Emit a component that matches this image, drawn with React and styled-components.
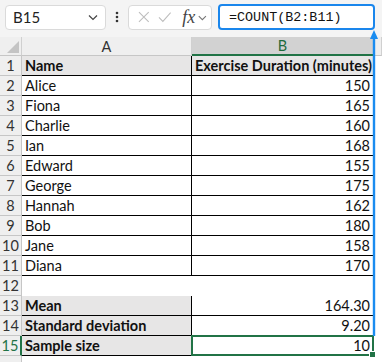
import React from 'react';
import styled, { createGlobalStyle } from 'styled-components';

const Global = createGlobalStyle`
  html, body { margin: 0; padding: 0; background: #fff; }
  body { width: 382px; height: 362px; overflow: hidden; font-family: Lato, 'Liberation Sans', sans-serif; }
`;

const Window = styled.div`
  position: relative;
  width: 382px;
  height: 362px;
  overflow: hidden;
  background: #fff;
`;

const Toolbar = styled.div`
  display: flex;
  align-items: center;
  height: 37px;
  padding: 0 0 3px 5px;
  box-sizing: border-box;
  background: #f4f4f4;
`;

const NameBox = styled.div`
  display: flex;
  align-items: center;
  justify-content: space-between;
  width: 101px;
  height: 25px;
  box-sizing: border-box;
  padding: 0 6px 0 7px;
  background: #fff;
  border: 1px solid #dadada;
  border-radius: 4px;
  font-size: 15px;
  color: #222;
`;

const Dots = styled.div`
  width: 22px;
  display: flex;
  justify-content: center;
`;

const FnBox = styled.div`
  display: flex;
  align-items: center;
  gap: 8px;
  width: 84px;
  height: 25px;
  box-sizing: border-box;
  padding: 0 3px 0 9px;
  background: #fff;
  border: 1px solid #dadada;
  border-radius: 4px;
`;

const Fx = styled.span`
  font-family: 'Liberation Serif', serif;
  font-style: italic;
  font-size: 18px;
  color: #444;
  margin-left: 3px;
  margin-right: -6px;
`;

const FormulaBox = styled.div`
  display: flex;
  align-items: center;
  margin-left: 6px;
  width: 157px;
  height: 26px;
  box-sizing: border-box;
  padding-left: 9px;
  background: #fff;
  border: 2px solid #1a86ec;
  border-radius: 4px;
  font-family: 'Liberation Mono', monospace;
  font-size: 13.4px;
  color: #111;
`;

const Sheet = styled.div`
  display: flex;
  flex-direction: column;
`;

const Row = styled.div`
  display: grid;
  grid-template-columns: 22px 170px 182px 1fr;
  height: ${p => (p.$head ? 19 : 20)}px;
`;

const Corner = styled.div`
  position: relative;
  background: #efefef;
  border-right: 1px solid #d0d0d0;
  border-bottom: 1px solid #c6c6c6;
  box-sizing: border-box;
  overflow: hidden;
  &::after {
    content: '';
    position: absolute;
    right: 2px;
    bottom: 2px;
    border-left: 12px solid transparent;
    border-bottom: 12px solid #c4c4c4;
  }
`;

const ColHead = styled.div`
  display: flex;
  align-items: center;
  justify-content: center;
  font-size: 14.5px;
  box-sizing: border-box;
  background: ${p => (p.$active ? '#d2d2d2' : '#efefef')};
  color: ${p => (p.$active ? '#1e6b3c' : '#333')};
  border-right: 1px solid #d0d0d0;
  border-bottom: ${p => (p.$active ? '2px solid #217346' : '1px solid #c6c6c6')};
`;

const RowHead = styled.div`
  display: flex;
  align-items: center;
  justify-content: center;
  font-size: 14.5px;
  box-sizing: border-box;
  background: #efefef;
  color: ${p => (p.$active ? '#217346' : '#333')};
  border-bottom: 1px solid #c6c6c6;
  border-right: ${p => (p.$active ? '2px solid #217346' : '1px solid #c6c6c6')};
`;

const Cell = styled.div`
  display: flex;
  align-items: center;
  justify-content: ${p => (p.$num ? 'flex-end' : 'flex-start')};
  padding: ${p => (p.$num ? '0 3px 0 0' : '0 0 0 3px')};
  box-sizing: border-box;
  font-size: 14.5px;
  font-weight: ${p => (p.$bold ? 700 : 400)};
  color: #111;
  white-space: nowrap;
  background: ${p => (p.$shade ? '#e7e6e6' : '#fff')};
  border-right: ${p => (p.$line ? '1px solid #000' : 'none')};
  border-bottom: ${p => (p.$line ? '1px solid #000' : 'none')};
`;

const Filler = styled.div`
  background: #fff;
`;

const Selected = styled(Cell)`
  position: relative;
  border: 2px solid #217346;
  margin: -1px 0 0 -1px;
  padding-right: 2px;
  &::after {
    content: '';
    position: absolute;
    right: -4px;
    bottom: -4px;
    width: 5px;
    height: 5px;
    background: #217346;
    border: 1px solid #fff;
  }
`;

const Arrow = styled.svg`
  position: absolute;
  left: 369px;
  top: 30px;
`;

const data = [
  ['Alice', 150], ['Fiona', 165], ['Charlie', 160], ['Ian', 168], ['Edward', 155],
  ['George', 175], ['Hannah', 162], ['Bob', 180], ['Jane', 158], ['Diana', 170],
];

const Chevron = ({ color = '#444', size = 12 }) => (
  <svg width={size} height={size} viewBox="0 0 12 12">
    <path d="M2 4.5 L6 8.5 L10 4.5" fill="none" stroke={color} strokeWidth="1.2" />
  </svg>
);

export default function App() {
  return (
    <Window>
      <Global />
      <Toolbar>
        <NameBox>
          <span>B15</span>
          <Chevron />
        </NameBox>
        <Dots>
          <svg width="4" height="12" viewBox="0 0 4 12">
            <circle cx="2" cy="2" r="1.3" fill="#333" />
            <circle cx="2" cy="6" r="1.3" fill="#333" />
            <circle cx="2" cy="10" r="1.3" fill="#333" />
          </svg>
        </Dots>
        <FnBox>
          <svg width="12" height="12" viewBox="0 0 12 12">
            <path d="M1 1 L11 11 M11 1 L1 11" stroke="#bdbdbd" strokeWidth="1.1" />
          </svg>
          <svg width="14" height="12" viewBox="0 0 14 12">
            <path d="M1 6.5 L5 10.5 L13 1.5" fill="none" stroke="#bdbdbd" strokeWidth="1.1" />
          </svg>
          <Fx>fx</Fx>
          <Chevron color="#777" size={11} />
        </FnBox>
        <FormulaBox>=COUNT(B2:B11)</FormulaBox>
      </Toolbar>
      <Sheet>
        <Row $head>
          <Corner />
          <ColHead>A</ColHead>
          <ColHead $active>B</ColHead>
          <ColHead />
        </Row>
        <Row>
          <RowHead>1</RowHead>
          <Cell $bold $shade $line>Name</Cell>
          <Cell $bold $shade $line>Exercise Duration (minutes)</Cell>
          <Filler />
        </Row>
        {data.map(([name, mins], i) => (
          <Row key={name}>
            <RowHead>{i + 2}</RowHead>
            <Cell $line>{name}</Cell>
            <Cell $num $line>{mins}</Cell>
            <Filler />
          </Row>
        ))}
        <Row>
          <RowHead>12</RowHead>
          <Cell />
          <Cell />
          <Filler />
        </Row>
        <Row>
          <RowHead>13</RowHead>
          <Cell $bold $shade $line>Mean</Cell>
          <Cell $num $line>164.30</Cell>
          <Filler />
        </Row>
        <Row>
          <RowHead>14</RowHead>
          <Cell $bold $shade $line>Standard deviation</Cell>
          <Cell $num $line>9.20</Cell>
          <Filler />
        </Row>
        <Row>
          <RowHead $active>15</RowHead>
          <Cell $bold $shade $line>Sample size</Cell>
          <Selected $num>10</Selected>
          <Filler />
        </Row>
        <Row>
          <RowHead />
          <Cell />
          <Cell />
          <Filler />
        </Row>
      </Sheet>
      <Arrow width="10" height="306" viewBox="0 0 10 306">
        <path d="M5 4 L5 306" stroke="#1a8cf0" strokeWidth="2.4" />
        <path d="M5 0 L9 9 L1 9 Z" fill="#1a8cf0" />
      </Arrow>
    </Window>
  );
}
